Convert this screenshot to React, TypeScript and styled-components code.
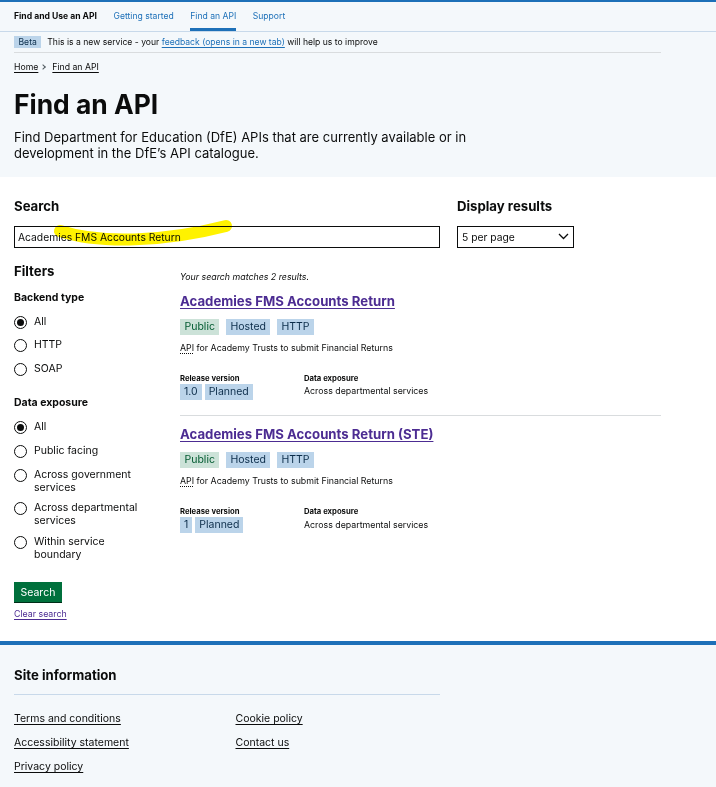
import styled, { createGlobalStyle } from "styled-components"

const GlobalStyle = createGlobalStyle`
  *, *::before, *::after {
    box-sizing: border-box;
  }

  body {
    margin: 0;
    background: #fff;
    color: #0b0c0c;
    font-family: Inter, "Noto Sans", Arial, sans-serif;
  }
`

const Container = styled.div`
  width: 647px;
  margin: 0 14px;
`

/* ---------- masthead ---------- */

const Masthead = styled.div`
  background: #f4f8fb;
  border-top: 2px solid #1d70b8;
`

const ServiceNav = styled.nav`
  border-bottom: 1px solid #c8d9ea;
`

const NavList = styled.ul`
  display: flex;
  gap: 16.5px;
  height: 29px;
  margin: 0;
  padding: 0;
  list-style: none;
`

const NavItem = styled.li<{ $active?: boolean }>`
  display: flex;
  align-items: center;
  padding-top: 2px;
  border-bottom: 3px solid ${({ $active }) => ($active ? "#1d70b8" : "transparent")};
  font-size: 8.6px;
`

const ServiceName = styled.span`
  font-weight: 700;
`

const NavLink = styled.a`
  color: #1d70b8;
  text-decoration: none;
`

const PhaseBanner = styled.div`
  display: flex;
  align-items: center;
  height: 21px;
  border-bottom: 1px solid #d9dcde;
  font-size: 8.6px;
`

const PhaseTag = styled.strong`
  margin-right: 6px;
  padding: 0 4.5px;
  line-height: 12px;
  background: #bbd4ea;
  color: #0c2d4a;
  font-weight: 400;
`

const BannerLink = styled.a`
  color: #1d70b8;
  text-decoration: underline;
  text-underline-offset: 1.5px;
`

const Breadcrumbs = styled.ol`
  display: flex;
  align-items: center;
  margin: 8.5px 0 0;
  padding: 0;
  list-style: none;
  font-size: 8.7px;
  line-height: 11px;
`

const Crumb = styled.li`
  display: flex;
  align-items: center;

  & + &::before {
    content: "";
    width: 4px;
    height: 4px;
    margin: 0 7px 0 3px;
    border-top: 1px solid #505a5f;
    border-right: 1px solid #505a5f;
    transform: rotate(45deg);
  }
`

const CrumbLink = styled.a`
  color: #0b0c0c;
  text-decoration: underline;
  text-underline-offset: 1.5px;
`

const PageTitle = styled.h1`
  margin: 17px 0 10px;
  font-size: 26.4px;
  line-height: 29px;
  font-weight: 700;
`

const Lead = styled.p`
  max-width: 470px;
  margin: 0;
  padding-bottom: 15px;
  font-size: 13px;
  line-height: 16.5px;
`

/* ---------- search form ---------- */

const Main = styled.main`
  padding: 21px 0 22.5px;
`

const SearchRow = styled.div`
  display: grid;
  grid-template-columns: 426px 1fr;
  gap: 17px;
`

const FieldLabel = styled.label`
  display: block;
  margin-bottom: 11.75px;
  font-size: 13.2px;
  line-height: 16.5px;
  font-weight: 700;
`

const InputWrap = styled.div`
  position: relative;
`

const TextInput = styled.div`
  display: flex;
  align-items: center;
  height: 22px;
  padding: 0 3px;
  border: 1px solid #0b0c0c;
  font-size: 10.3px;
`

const Highlight = styled.svg`
  position: absolute;
  left: 0;
  top: -8px;
  overflow: visible;
  pointer-events: none;
  mix-blend-mode: multiply;
`

const SelectBox = styled.div`
  display: flex;
  align-items: center;
  justify-content: space-between;
  width: 117px;
  height: 22px;
  padding: 0 4px 0 4px;
  border: 1px solid #0b0c0c;
  font-size: 10.3px;
`

const ResultsGrid = styled.div`
  display: grid;
  grid-template-columns: 149px 1fr;
  gap: 17px;
  margin-top: 14.75px;
`

/* ---------- filters ---------- */

const FiltersTitle = styled.h2`
  margin: 0;
  font-size: 13.2px;
  line-height: 16.5px;
  font-weight: 700;
`

const Fieldset = styled.fieldset<{ $gap: number }>`
  margin: ${({ $gap }) => $gap}px 0 0;
  padding: 0;
  border: 0;
`

const Legend = styled.legend`
  padding: 0;
  margin-bottom: 10px;
  font-size: 10.5px;
  line-height: 13px;
  font-weight: 700;
`

const RadioList = styled.div`
  display: flex;
  flex-direction: column;
  gap: 6.6px;
`

const RadioItem = styled.label`
  display: flex;
  align-items: flex-start;
  gap: 7px;
  min-height: 17px;
  font-size: 10.5px;
  line-height: 13px;
`

const RadioCircle = styled.span<{ $checked?: boolean }>`
  position: relative;
  flex: none;
  width: 13px;
  height: 13px;
  margin-top: 2px;
  border: 1.5px solid #0b0c0c;
  border-radius: 50%;

  &::after {
    content: "";
    display: ${({ $checked }) => ($checked ? "block" : "none")};
    position: absolute;
    inset: 2px;
    border-radius: 50%;
    background: #0b0c0c;
  }
`

const RadioText = styled.span`
  max-width: 106px;
  padding-top: 1px;
`

const Button = styled.button`
  display: block;
  margin-top: 21.5px;
  height: 20px;
  padding: 0 6.5px;
  border: 0;
  background: #00703c;
  box-shadow: 0 1px 0 #002d18;
  color: #fff;
  font-family: inherit;
  font-size: 10.5px;
`

const ClearLink = styled.a`
  display: block;
  width: fit-content;
  margin-top: 5.5px;
  color: #4c2c92;
  font-size: 8.8px;
  line-height: 11px;
  text-decoration: underline;
  text-underline-offset: 1.5px;
`

/* ---------- results ---------- */

const ResultCount = styled.p`
  margin: 8.75px 0 0;
  font-size: 8.8px;
  line-height: 11px;
  font-style: italic;
`

const ResultTitle = styled.h2`
  margin: 10.25px 0 0;
  font-size: 13.2px;
  line-height: 16.5px;
  font-weight: 700;
`

const TitleLink = styled.a`
  color: #4c2c92;
  text-decoration: underline;
  text-decoration-thickness: 1px;
  text-underline-offset: 2px;
`

const TagRow = styled.div<{ $gap: number }>`
  display: flex;
  gap: ${({ $gap }) => $gap}px;
`

const Tag = styled.span<{ $tone: "green" | "blue" }>`
  display: inline-block;
  padding: 2px 4.5px;
  font-size: 10.5px;
  line-height: 12px;
  background: ${({ $tone }) => ($tone === "green" ? "#cce2d8" : "#bbd4ea")};
  color: ${({ $tone }) => ($tone === "green" ? "#005a30" : "#0c2d4a")};
`

const Description = styled.p`
  margin: 7.2px 0 0;
  font-size: 8.8px;
  line-height: 11px;
`

const Abbr = styled.abbr`
  text-decoration: underline dotted;
  text-underline-offset: 1.5px;
`

const Meta = styled.dl`
  display: grid;
  grid-template-columns: 124px 1fr;
  margin: 20.7px 0 0;
`

const MetaItem = styled.div``

const MetaTerm = styled.dt`
  font-size: 7.7px;
  line-height: 9.6px;
  font-weight: 700;
`

const MetaValue = styled.dd<{ $offset: number }>`
  margin: ${({ $offset }) => $offset}px 0 0;
  font-size: 8.8px;
  line-height: 11px;
`

const VersionTag = styled.span`
  display: inline-block;
  padding: 2px 4px;
  font-size: 10.5px;
  line-height: 12px;
  background: #bbd4ea;
  color: #0c2d4a;
`

const Divider = styled.hr`
  margin: 15px 0 0;
  border: 0;
  border-top: 1px solid #d9dcde;
`

/* ---------- footer ---------- */

const Footer = styled.footer`
  border-top: 4px solid #1d70b8;
  background: #f4f8fb;
  padding: 21.75px 0 22px;
`

const FooterTitle = styled.h2`
  margin: 0;
  font-size: 13.2px;
  line-height: 16.5px;
  font-weight: 700;
`

const FooterRule = styled.hr`
  width: 426px;
  margin: 10.75px 0 0;
  border: 0;
  border-top: 1px solid #c8d9ea;
`

const FooterLinks = styled.ul`
  display: grid;
  grid-template-columns: 204.5px 204.5px;
  column-gap: 17px;
  row-gap: 11px;
  margin: 16.5px 0 0;
  padding: 0;
  list-style: none;
  font-size: 10.5px;
  line-height: 13px;
`

const FooterLink = styled.a`
  color: #0b0c0c;
  text-decoration: underline;
  text-underline-offset: 1.5px;
`

type Api = {
  title: string
  version: string
  exposure: string
}

const apis: Api[] = [
  { title: "Academies FMS Accounts Return", version: "1.0", exposure: "Across departmental services" },
  { title: "Academies FMS Accounts Return (STE)", version: "1", exposure: "Across departmental services" },
]

const backendTypes = ["All", "HTTP", "SOAP"]
const exposures = [
  "All",
  "Public facing",
  "Across government services",
  "Across departmental services",
  "Within service boundary",
]

function RadioGroup({ options }: { options: string[] }) {
  return (
    <RadioList>
      {options.map((option, i) => (
        <RadioItem key={option}>
          <RadioCircle $checked={i === 0} />
          <RadioText>{option}</RadioText>
        </RadioItem>
      ))}
    </RadioList>
  )
}

function ApiResult({ api, last }: { api: Api; last?: boolean }) {
  return (
    <article>
      <ResultTitle>
        <TitleLink href="#">{api.title}</TitleLink>
      </ResultTitle>
      <TagRow $gap={6.5} style={{ marginTop: 9.75 }}>
        <Tag $tone="green">Public</Tag>
        <Tag $tone="blue">Hosted</Tag>
        <Tag $tone="blue">HTTP</Tag>
      </TagRow>
      <Description>
        <Abbr title="Application Programming Interface">API</Abbr> for Academy Trusts to submit Financial Returns
      </Description>
      <Meta>
        <MetaItem>
          <MetaTerm>Release version</MetaTerm>
          <MetaValue $offset={0.5}>
            <TagRow $gap={3}>
              <VersionTag>{api.version}</VersionTag>
              <VersionTag>Planned</VersionTag>
            </TagRow>
          </MetaValue>
        </MetaItem>
        <MetaItem>
          <MetaTerm>Data exposure</MetaTerm>
          <MetaValue $offset={2}>{api.exposure}</MetaValue>
        </MetaItem>
      </Meta>
      {!last && <Divider />}
    </article>
  )
}

export default function App() {
  return (
    <>
      <GlobalStyle />
      <Masthead>
        <ServiceNav>
          <Container>
            <NavList>
              <NavItem>
                <ServiceName>Find and Use an API</ServiceName>
              </NavItem>
              <NavItem>
                <NavLink href="#">Getting started</NavLink>
              </NavItem>
              <NavItem $active>
                <NavLink href="#">Find an API</NavLink>
              </NavItem>
              <NavItem>
                <NavLink href="#">Support</NavLink>
              </NavItem>
            </NavList>
          </Container>
        </ServiceNav>
        <Container>
          <PhaseBanner>
            <PhaseTag>Beta</PhaseTag>
            <span>
              This is a new service - your <BannerLink href="#">feedback (opens in a new tab)</BannerLink> will help
              us to improve
            </span>
          </PhaseBanner>
          <Breadcrumbs>
            <Crumb>
              <CrumbLink href="#">Home</CrumbLink>
            </Crumb>
            <Crumb>
              <CrumbLink href="#">Find an API</CrumbLink>
            </Crumb>
          </Breadcrumbs>
          <PageTitle>Find an API</PageTitle>
          <Lead>
            Find Department for Education (DfE) APIs that are currently available or in development in the DfE’s API
            catalogue.
          </Lead>
        </Container>
      </Masthead>

      <Main>
        <Container>
          <SearchRow>
            <div>
              <FieldLabel>Search</FieldLabel>
              <InputWrap>
                <TextInput>Academies FMS Accounts Return</TextInput>
                {/* marker swoosh over the search term */}
                <Highlight width="240" height="30" viewBox="0 0 240 30">
                  <path
                    d="M46 13 C 86 26, 150 24, 212 8"
                    fill="none"
                    stroke="#fff200"
                    strokeWidth="12"
                    strokeLinecap="round"
                  />
                </Highlight>
              </InputWrap>
            </div>
            <div>
              <FieldLabel>Display results</FieldLabel>
              <SelectBox>
                <span>5 per page</span>
                <svg width="11" height="7" viewBox="0 0 11 7">
                  <polyline points="1,1 5.5,5.5 10,1" fill="none" stroke="#0b0c0c" strokeWidth="1.3" />
                </svg>
              </SelectBox>
            </div>
          </SearchRow>

          <ResultsGrid>
            <div>
              <FiltersTitle>Filters</FiltersTitle>
              <Fieldset $gap={11.75}>
                <Legend>Backend type</Legend>
                <RadioGroup options={backendTypes} />
              </Fieldset>
              <Fieldset $gap={18.5}>
                <Legend>Data exposure</Legend>
                <RadioGroup options={exposures} />
              </Fieldset>
              <Button>Search</Button>
              <ClearLink href="#">Clear search</ClearLink>
            </div>
            <div>
              <ResultCount>Your search matches 2 results.</ResultCount>
              {apis.map((api, i) => (
                <ApiResult key={api.title} api={api} last={i === apis.length - 1} />
              ))}
            </div>
          </ResultsGrid>
        </Container>
      </Main>

      <Footer>
        <Container>
          <FooterTitle>Site information</FooterTitle>
          <FooterRule />
          <FooterLinks>
            <li>
              <FooterLink href="#">Terms and conditions</FooterLink>
            </li>
            <li>
              <FooterLink href="#">Cookie policy</FooterLink>
            </li>
            <li>
              <FooterLink href="#">Accessibility statement</FooterLink>
            </li>
            <li>
              <FooterLink href="#">Contact us</FooterLink>
            </li>
            <li>
              <FooterLink href="#">Privacy policy</FooterLink>
            </li>
          </FooterLinks>
        </Container>
      </Footer>
    </>
  )
}
